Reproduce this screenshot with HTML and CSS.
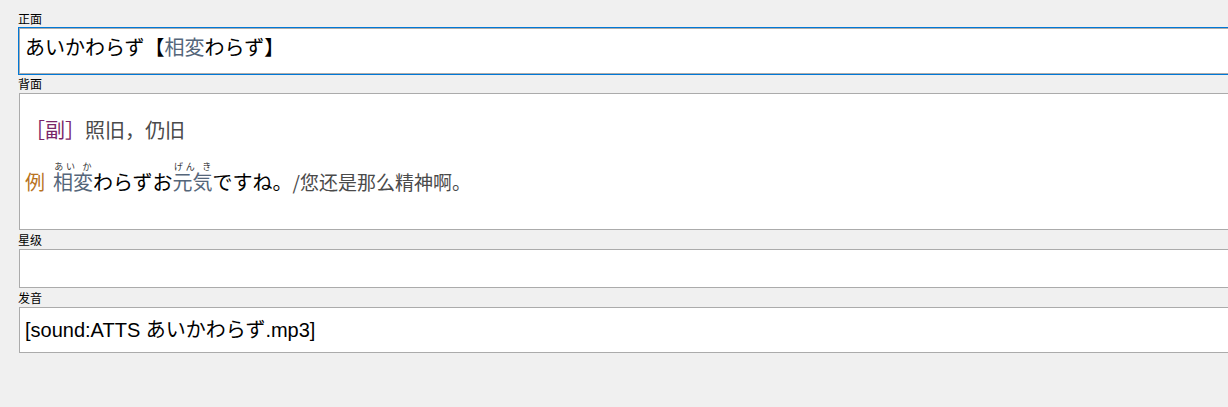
FILE: index.html
```html
<!DOCTYPE html>
<html lang="ja">
<head>
<meta charset="utf-8">
<link rel="stylesheet" href="styles.css">
</head>
<body>
<div class="editor">
  <div class="label">正面</div>
  <div class="field field-front focused">あいかわらず<span class="br">【</span><span class="kanji">相変</span>わらず<span class="br">】</span></div>

  <div class="label">背面</div>
  <div class="field field-back">
    <div class="line1"><span class="pos">［副］</span><span class="mean">照旧，仍旧</span></div>
    <div class="line2"><span class="rei">例</span><ruby class="kanji">相変<rt>あい か</rt></ruby>わらずお<ruby class="kanji">元気<rt>げん き</rt></ruby>ですね。<span class="trans">/您还是那么精神啊。</span></div>
  </div>

  <div class="label">星级</div>
  <div class="field field-star"></div>

  <div class="label">发音</div>
  <div class="field field-sound">[sound:ATTS あいかわらず.mp3]</div>
</div>
</body>
</html>
```

FILE: styles.css
```css
html, body {
  margin: 0;
  padding: 0;
  background: #f0f0f0;
  overflow: hidden;
}

body {
  width: 1228px;
  height: 407px;
}

.editor {
  padding: 9px 0 0 18px;
  margin-right: -20px;
  display: flex;
  flex-direction: column;
}

.label {
  height: 19px;
  line-height: 19px;
  font-family: "Noto Sans CJK SC", sans-serif;
  font-size: 12px;
  color: #000;
}

.field {
  margin-left: 1px;
  background: #fff;
  border: 1px solid #ababab;
  box-sizing: border-box;
  padding-left: 5px;
  font-family: "Liberation Sans", "Noto Sans CJK JP", sans-serif;
  font-size: 20px;
  color: #000;
}

.focused {
  box-shadow: 0 0 0 1px #0078d7;
}

.field-front {
  height: 46px;
  padding-top: 4px;
  line-height: 28px;
  font-family: "Noto Sans CJK JP", sans-serif;
}

.field-back {
  height: 137px;
  padding-top: 24px;
  font-family: "Noto Sans CJK JP", sans-serif;
}

.line1 {
  line-height: 24px;
}

.line2 {
  margin-top: 20px;
  line-height: 40px;
}

.field-star {
  height: 39px;
}

.field-sound {
  height: 46px;
  padding-top: 8px;
  line-height: 28px;
}

.br {
  color: #000;
}

.kanji {
  color: #55667a;
}

.kanji rt {
  font-size: 9px;
  line-height: 1;
  color: #333;
}

.pos {
  color: #7a2468;
}

.mean {
  color: #4a4a4a;
}

.rei {
  color: #b8731e;
  margin-right: 8px;
}

.trans {
  color: #4a4a4a;
  font-size: 19px;
}
```
